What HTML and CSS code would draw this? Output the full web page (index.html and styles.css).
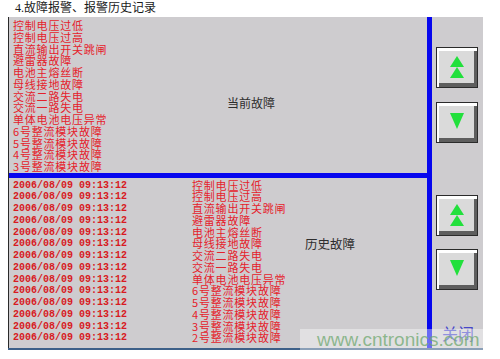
FILE: index.html
```html
<!DOCTYPE html>
<html lang="zh-CN">
<head>
<meta charset="utf-8">
<link rel="stylesheet" href="styles.css">
</head>
<body>
<div class="title">4.故障报警、报警历史记录</div>
<div class="panel">
  <div class="main">
    <div class="current">
      <ul class="cur-list">
        <li>控制电压过低</li>
        <li>控制电压过高</li>
        <li>直流输出开关跳闸</li>
        <li>避雷器故障</li>
        <li>电池主熔丝断</li>
        <li>母线接地故障</li>
        <li>交流二路失电</li>
        <li>交流一路失电</li>
        <li>单体电池电压异常</li>
        <li>6号整流模块故障</li>
        <li>5号整流模块故障</li>
        <li>4号整流模块故障</li>
        <li>3号整流模块故障</li>
      </ul>
      <div class="label label-cur">当前故障</div>
    </div>
    <div class="hbar"></div>
    <div class="history">
      <div class="hist">
        <span class="t">2006/08/09 09:13:12</span><span class="m">控制电压过低</span>
        <span class="t">2006/08/09 09:13:12</span><span class="m">控制电压过高</span>
        <span class="t">2006/08/09 09:13:12</span><span class="m">直流输出开关跳闸</span>
        <span class="t">2006/08/09 09:13:12</span><span class="m">避雷器故障</span>
        <span class="t">2006/08/09 09:13:12</span><span class="m">电池主熔丝断</span>
        <span class="t">2006/08/09 09:13:12</span><span class="m">母线接地故障</span>
        <span class="t">2006/08/09 09:13:12</span><span class="m">交流二路失电</span>
        <span class="t">2006/08/09 09:13:12</span><span class="m">交流一路失电</span>
        <span class="t">2006/08/09 09:13:12</span><span class="m">单体电池电压异常</span>
        <span class="t">2006/08/09 09:13:12</span><span class="m">6号整流模块故障</span>
        <span class="t">2006/08/09 09:13:12</span><span class="m">5号整流模块故障</span>
        <span class="t">2006/08/09 09:13:12</span><span class="m">4号整流模块故障</span>
        <span class="t">2006/08/09 09:13:12</span><span class="m">3号整流模块故障</span>
        <span class="t">2006/08/09 09:13:12</span><span class="m">2号整流模块故障</span>
      </div>
      <div class="label label-hist">历史故障</div>
    </div>
  </div>
  <div class="vbar"></div>
  <div class="side">
    <div class="btn btn-1"><svg width="14" height="23" viewBox="0 0 14 23"><polygon points="7,0 14,11 0,11" fill="#22e03c"/><polygon points="7,11 14,22 0,22" fill="#22e03c"/></svg></div>
    <div class="btn btn-2"><svg width="14" height="16" viewBox="0 0 14 16"><polygon points="0,0 14,0 7,16" fill="#22e03c"/></svg></div>
    <div class="btn btn-3"><svg width="14" height="23" viewBox="0 0 14 23"><polygon points="7,0 14,11 0,11" fill="#22e03c"/><polygon points="7,11 14,22 0,22" fill="#22e03c"/></svg></div>
    <div class="btn btn-4"><svg width="14" height="16" viewBox="0 0 14 16"><polygon points="0,0 14,0 7,16" fill="#22e03c"/></svg></div>
    <div class="close">关闭</div>
  </div>
</div>
<div class="watermark">www.cntronics.com</div>
</body>
</html>
```
FILE: styles.css
```css
html, body {
  margin: 0;
  padding: 0;
  background: #ffffff;
}
body {
  position: relative;
  width: 500px;
  height: 359px;
  overflow: hidden;
  font-family: "Noto Sans CJK SC", sans-serif;
}
.title {
  height: 17px;
  line-height: 16px;
  padding-left: 15px;
  font-family: "Liberation Serif", "Noto Sans CJK SC", serif;
  font-size: 12px;
  color: #1a1a1a;
}
.panel {
  margin-left: 8px;
  width: 475px;
  height: 331px;
  display: flex;
  background: #cecccf;
  border-bottom: 2px solid #3d5f88;
}
.main {
  width: 418px;
  border-left: 1px solid #2a2a2a;
  display: flex;
  flex-direction: column;
}
.current {
  height: 156px;
  box-sizing: border-box;
  padding: 3px 0 0 4px;
  display: flex;
}
.cur-list {
  list-style: none;
  margin: 0;
  padding: 0;
  width: 214px;
  font-size: 11px;
  letter-spacing: 0.8px;
  line-height: 11.75px;
  color: #e5212b;
}
.label {
  font-size: 12px;
  line-height: 12px;
  color: #2e2e2e;
  white-space: nowrap;
}
.label-cur {
  margin-top: 77px;
}
.hbar {
  height: 5px;
  background: #0707ee;
}
.history {
  flex: 1;
  padding: 1.5px 0 0 4px;
  display: flex;
}
.hist {
  width: 292px;
  display: grid;
  grid-template-columns: 179px auto;
  grid-auto-rows: 11.75px;
  align-content: start;
}
.t {
  font-family: "Liberation Mono", monospace;
  font-weight: bold;
  font-size: 10px;
  line-height: 11.75px;
  color: #d81a22;
  white-space: nowrap;
}
.m {
  font-size: 11px;
  letter-spacing: 0.8px;
  line-height: 11.75px;
  color: #e5212b;
  white-space: nowrap;
}
.label-hist {
  margin-top: 58px;
  font-size: 12.5px;
}
.vbar {
  width: 5px;
  background: #0707ee;
}
.side {
  width: 51px;
  padding-top: 30px;
  display: flex;
  flex-direction: column;
  align-items: flex-start;
}
.btn {
  margin-left: 4px;
  width: 42px;
  height: 41px;
  box-sizing: border-box;
  border: 1px solid #2b2b2b;
  background: #dadada;
  box-shadow: inset 2px 3px 0 #ffffff, inset -3px -4px 0 #5e5e5e;
  display: flex;
  align-items: center;
  justify-content: center;
}
.btn-2 { margin-top: 14px; padding-bottom: 3px; }
.btn-3 { margin-top: 52px; }
.btn-4 { margin-top: 13px; padding-bottom: 3px; }
.close {
  margin-top: 35px;
  margin-left: 10px;
  font-size: 16px;
  line-height: 16px;
  color: #4747c9;
}
.watermark {
  position: absolute;
  left: 300px;
  top: 329px;
  width: 183px;
  height: 21px;
  box-sizing: border-box;
  padding-left: 17px;
  background: rgba(255, 255, 255, 0.4);
  font-family: "Liberation Sans", sans-serif;
  font-size: 19px;
  line-height: 21px;
  color: rgba(112, 168, 112, 0.75);
  white-space: nowrap;
}
```
